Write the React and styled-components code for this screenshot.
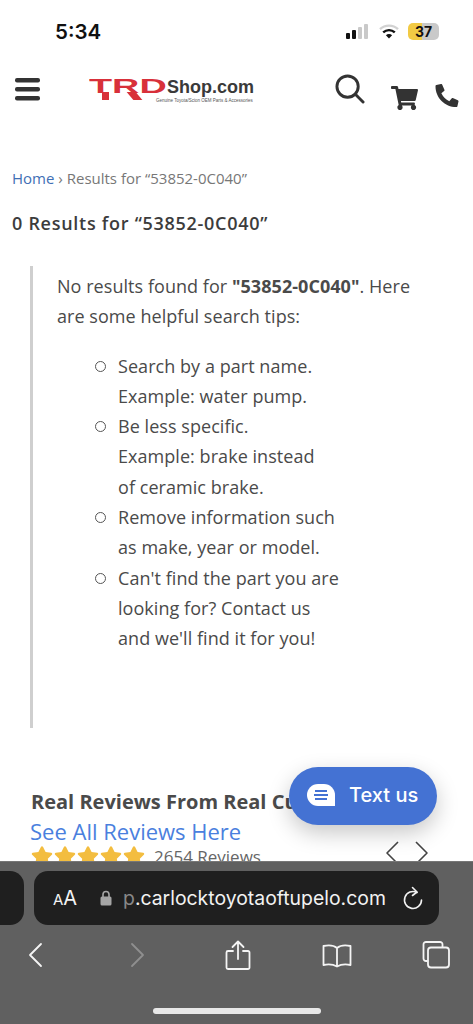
import React from 'react'
import styled, { createGlobalStyle } from 'styled-components'
import { FaShoppingCart, FaPhoneAlt, FaStar } from 'react-icons/fa'

const GlobalStyle = createGlobalStyle`
    html, body {
        margin: 0;
        padding: 0;
        background: #fff;
    }
    * {
        box-sizing: border-box;
    }
`

const Page = styled.div`
    position: relative;
    width: 473px;
    height: 1024px;
    overflow: hidden;
    background: #fff;
    font-family: 'Open Sans', sans-serif;
    color: #4a4a4a;
`
const StatusBar = styled.div`
    display: flex;
    align-items: center;
    justify-content: space-between;
    height: 62px;
    padding: 0 34px 0 55px;
`
const Clock = styled.div`
    font-family: Inter, sans-serif;
    font-size: 20.5px;
    font-weight: 600;
    color: #111;
`
const StatusIcons = styled.div`
    display: flex;
    align-items: center;
    gap: 10px;
`
const Battery = styled.div`
    width: 31px;
    height: 17px;
    margin-left: -1px;
    border-radius: 5px;
    background: linear-gradient(90deg, #f2ca44 45%, #c9c9c9 45%);
    font-family: Inter, sans-serif;
    font-size: 14px;
    font-weight: 700;
    line-height: 17px;
    text-align: center;
    color: #111;
`
const Header = styled.header`
    display: flex;
    align-items: flex-start;
    height: 100px;
    padding: 12px 14px 0 15px;
`
const Menu = styled.svg`
    width: 25px;
    height: 23px;
    margin-top: 4px;
    color: #333;
`
const Logo = styled.div`
    display: flex;
    flex-direction: column;
    width: 166px;
    margin: 4px 0 0 49px;
`
const LogoTop = styled.div`
    display: flex;
    align-items: flex-start;
    height: 23px;
`
const LogoMark = styled.span`
    position: relative;
    display: inline-block;
    width: 78px;
    height: 22px;
    /* the T stem and R leg run below the wide letters */
    &::before,
    &::after {
        content: '';
        position: absolute;
        top: 14px;
        height: 8px;
        background: #d8303a;
    }
    &::before {
        left: 13px;
        width: 7px;
    }
    &::after {
        left: 41px;
        width: 9px;
        transform: skewX(40deg);
    }
`
const LogoLetters = styled.span`
    display: block;
    font-family: 'Liberation Sans', sans-serif;
    font-size: 21px;
    font-weight: 700;
    line-height: 15px;
    color: #d8303a;
    transform: scaleX(1.8);
    transform-origin: left center;
`
const LogoName = styled.span`
    font-family: 'Liberation Sans', sans-serif;
    font-size: 18px;
    font-weight: 700;
    line-height: 19px;
    color: #3a3a3a;
`
const LogoTag = styled.span`
    margin: -3px 0 0 67px;
    font-family: 'Liberation Sans', sans-serif;
    font-size: 4.5px;
    line-height: 6px;
    white-space: nowrap;
    color: #555;
`
const HeaderIcons = styled.div`
    display: flex;
    align-items: flex-start;
    margin-left: auto;
`
const SearchIcon = styled.svg`
    width: 30px;
    height: 30px;
    color: #333;
`
const CartIcon = styled(FaShoppingCart)`
    width: 27px;
    height: 24px;
    margin: 12px 0 0 26px;
    color: #333;
`
const PhoneIcon = styled(FaPhoneAlt)`
    width: 24px;
    height: 23px;
    margin: 10px 0 0 17px;
    color: #333;
`
const Main = styled.main`
    padding: 0 12px;
`
const Crumbs = styled.div`
    font-size: 15px;
    font-weight: 500;
    line-height: 20px;
    margin-top: 6px;
    color: #777;
`
const CrumbLink = styled.a`
    color: #3f6fb5;
`
const Title = styled.h1`
    margin: 23px 0 0;
    font-size: 18px;
    font-weight: 600;
    line-height: 24px;
    letter-spacing: 0.72px;
    color: #3c3c3c;
`
const Quote = styled.blockquote`
    height: 462px;
    margin: 31px 0 0 18px;
    padding: 5px 0 0 24px;
    border-left: 3px solid #cfcfcf;
    font-size: 18px;
    line-height: 30.3px;
    letter-spacing: 0.05px;
`
const Lead = styled.p`
    margin: 0;
    width: 372px;
`
const Tips = styled.ul`
    list-style: none;
    margin: 19px 0 0;
    padding: 0 0 0 61px;
`
const Tip = styled.li`
    position: relative;
    &::before {
        content: '';
        position: absolute;
        left: -23px;
        top: 10px;
        width: 9px;
        height: 9px;
        border: 1.6px solid #555;
        border-radius: 50%;
    }
`
const Reviews = styled.section`
    margin: 59px 0 0 19px;
`
const ReviewsTitle = styled.h2`
    margin: 0;
    font-size: 20px;
    font-weight: 700;
    line-height: 30px;
    white-space: nowrap;
    color: #4a4a4a;
`
const ReviewsLink = styled.a`
    display: block;
    margin: -1px 0 0 -1px;
    font-size: 22px;
    line-height: 30px;
    color: #4a80de;
`
const RatingRow = styled.div`
    display: flex;
    align-items: center;
    height: 20px;
`
const Stars = styled.div`
    display: flex;
    gap: 1px;
    margin-right: 9px;
    color: #f3bd3f;
`
const RatingCount = styled.span`
    font-size: 17px;
    color: #666;
`
const Arrows = styled.svg`
    width: 44px;
    height: 24px;
    margin-left: 125px;
    margin-top: -6px;
    color: #444;
`
const TextUs = styled.button`
    position: absolute;
    left: 289px;
    top: 767px;
    display: flex;
    align-items: center;
    gap: 14px;
    width: 148px;
    height: 58px;
    padding: 0 0 2px 18px;
    border: none;
    border-radius: 29px;
    background: #4472d3;
    box-shadow: 0 8px 22px rgba(0, 0, 0, 0.22);
    font-family: Inter, sans-serif;
    font-size: 20px;
    font-weight: 500;
    color: #fff;
`
const Browser = styled.div`
    position: absolute;
    left: 0;
    right: 0;
    bottom: 0;
    height: 163px;
    background: #606060;
    border-top: 1px solid #777;
`
const AddressRow = styled.div`
    display: flex;
    gap: 10px;
    margin-top: 9px;
`
const SideTab = styled.div`
    width: 24px;
    height: 54px;
    border-radius: 0 14px 14px 0;
    background: #1f1f1f;
`
const Address = styled.div`
    display: flex;
    align-items: center;
    width: 405px;
    height: 54px;
    padding: 0 15px 0 19px;
    border-radius: 14px;
    background: #1f1f1f;
    font-family: Inter, sans-serif;
    color: #f2f2f2;
`
const Aa = styled.span`
    width: 47px;
    font-size: 20px;
`
const SmallA = styled.span`
    font-size: 15px;
`
const Url = styled.span`
    margin-left: 11px;
    font-size: 19.4px;
    white-space: nowrap;
`
const FadedLetter = styled.span`
    color: #888;
`
const Reload = styled.svg`
    width: 22px;
    height: 24px;
    margin-left: auto;
`
const ToolBar = styled.div`
    display: flex;
    align-items: center;
    justify-content: space-between;
    height: 60px;
    padding: 0 22px 0 24px;
`
const ToolIcon = styled.svg`
    width: 30px;
    height: 30px;
    color: ${p => (p.$dim ? '#8f8f8f' : '#f4f4f4')};
`
const HomeBar = styled.div`
    position: absolute;
    left: 153px;
    top: 146px;
    width: 168px;
    height: 6px;
    border-radius: 3px;
    background: #e8e8e8;
`

const stroke = { fill: 'none', stroke: 'currentColor', strokeWidth: 1.8, strokeLinecap: 'round', strokeLinejoin: 'round' }

const App = () => {
    return (
        <Page>
            <GlobalStyle />
            <StatusBar>
                <Clock>5:34</Clock>
                <StatusIcons>
                    <svg width="23" height="15" viewBox="0 0 23 15">
                        <rect x="0" y="9" width="4" height="6" rx="1" fill="#111" />
                        <rect x="6" y="6" width="4" height="9" rx="1" fill="#111" />
                        <rect x="12" y="3" width="4" height="12" rx="1" fill="#c9c9c9" />
                        <rect x="18" y="0" width="4" height="15" rx="1" fill="#c9c9c9" />
                    </svg>
                    <svg width="20" height="15" viewBox="0 0 20 15">
                        <path d="M1 5.2a13 13 0 0 1 18 0" fill="none" stroke="#d2d2d2" strokeWidth="2.4" />
                        <path d="M4.2 8.4a8.6 8.6 0 0 1 11.6 0" fill="none" stroke="#111" strokeWidth="2.4" />
                        <path d="M10 14.5 6.9 11.2a4.4 4.4 0 0 1 6.2 0Z" fill="#111" />
                    </svg>
                    <Battery>37</Battery>
                </StatusIcons>
            </StatusBar>
            <Header>
                <Menu viewBox="0 0 25 23" fill="currentColor">
                    <rect y="0" width="25" height="4.500" rx="2" />
                    <rect y="9" width="25" height="4.500" rx="2" />
                    <rect y="18" width="25" height="4.500" rx="2" />
                </Menu>
                <Logo>
                    <LogoTop>
                        <LogoMark><LogoLetters>TRD</LogoLetters></LogoMark>
                        <LogoName>Shop.com</LogoName>
                    </LogoTop>
                    <LogoTag>Genuine Toyota/Scion OEM Parts &amp; Accessories</LogoTag>
                </Logo>
                <HeaderIcons>
                    <SearchIcon viewBox="0 0 31 31" {...stroke} strokeWidth="3">
                        <circle cx="13" cy="13" r="11" />
                        <path d="M21 21l8 8" />
                    </SearchIcon>
                    <CartIcon />
                    <PhoneIcon />
                </HeaderIcons>
            </Header>
            <Main>
                <Crumbs>
                    <CrumbLink>Home</CrumbLink> &rsaquo; Results for “53852-0C040”
                </Crumbs>
                <Title>0 Results for “53852-0C040”</Title>
                <Quote>
                    <Lead>
                        No results found for <strong>"53852-0C040"</strong>. Here are some helpful search tips:
                    </Lead>
                    <Tips>
                        <Tip>Search by a part name.<br />Example: water pump.</Tip>
                        <Tip>Be less specific.<br />Example: brake instead<br />of ceramic brake.</Tip>
                        <Tip>Remove information such<br />as make, year or model.</Tip>
                        <Tip>Can't find the part you are<br />looking for? Contact us<br />and we'll find it for you!</Tip>
                    </Tips>
                </Quote>
                <Reviews>
                    <ReviewsTitle>Real Reviews From Real Customers</ReviewsTitle>
                    <ReviewsLink>See All Reviews Here</ReviewsLink>
                    <RatingRow>
                        <Stars>
                            {[0, 1, 2, 3, 4].map(i => <FaStar key={i} size={22} />)}
                        </Stars>
                        <RatingCount>2654 Reviews</RatingCount>
                        <Arrows viewBox="0 0 44 24" {...stroke} strokeWidth="1.6" strokeLinecap="butt">
                            <path d="M12 1 1 12l11 11" />
                            <path d="M30 1l11 11-11 11" />
                        </Arrows>
                    </RatingRow>
                </Reviews>
            </Main>
            <TextUs>
                <svg width="28" height="22" viewBox="0 0 28 22">
                    <path d="M11 0h6a11 11 0 0 1 11 11v11H11A11 11 0 0 1 11 0Z" fill="#fff" />
                    <path d="M8 7h12M7 11h14M8 15h12" stroke="#4472d3" strokeWidth="1.8" />
                </svg>
                Text us
            </TextUs>
            <Browser>
                <AddressRow>
                    <SideTab />
                    <Address>
                        <Aa><SmallA>A</SmallA>A</Aa>
                        <svg width="12" height="16" viewBox="0 0 12 16">
                            <path d="M3 7V4.500a3 3 0 0 1 6 0V7" fill="none" stroke="#a5a5a5" strokeWidth="1.6" />
                            <rect x="0.500" y="6.500" width="11" height="9" rx="1.500" fill="#a5a5a5" />
                        </svg>
                        <Url><FadedLetter>p</FadedLetter>.carlocktoyotaoftupelo.com</Url>
                        <Reload viewBox="0 0 22 24" {...stroke} strokeWidth="1.6">
                            <path d="M15 6.500A8.500 8.500 0 1 0 19.500 14" />
                            <path d="M10.500 1.500 15 6l-4.500 3.500" />
                        </Reload>
                    </Address>
                </AddressRow>
                <ToolBar>
                    <ToolIcon viewBox="0 0 30 30" {...stroke}>
                        <path d="M15 4 4 15l11 11" transform="translate(2 0)" />
                    </ToolIcon>
                    <ToolIcon viewBox="0 0 30 30" {...stroke} $dim>
                        <path d="M9 4l11 11L9 26" />
                    </ToolIcon>
                    <ToolIcon viewBox="0 0 30 30" {...stroke}>
                        <path d="M15 19V2M9.500 7 15 1.500 20.500 7" />
                        <path d="M10 11H5a1.500 1.500 0 0 0-1.500 1.500v15A1.500 1.500 0 0 0 5 29h20a1.500 1.500 0 0 0 1.500-1.500v-15A1.500 1.500 0 0 0 25 11h-5" />
                    </ToolIcon>
                    <ToolIcon viewBox="0 0 30 30" {...stroke}>
                        <path d="M15 8C12 5.500 6 5 1.500 6v19c5-1 10-.5 13.500 1.500 3.500-2 8.500-2.500 13.500-1.500V6C24 5 18 5.500 15 8Zm0 0v18" />
                    </ToolIcon>
                    <ToolIcon viewBox="0 0 30 30" {...stroke}>
                        <path d="M6 21H5a2.500 2.500 0 0 1-2.500-2.500v-14A2.500 2.500 0 0 1 5 2h14a2.500 2.500 0 0 1 2.500 2.500V7" />
                        <rect x="7" y="7.500" width="21" height="20" rx="3" />
                    </ToolIcon>
                </ToolBar>
                <HomeBar />
            </Browser>
        </Page>
    )
}

export default App
